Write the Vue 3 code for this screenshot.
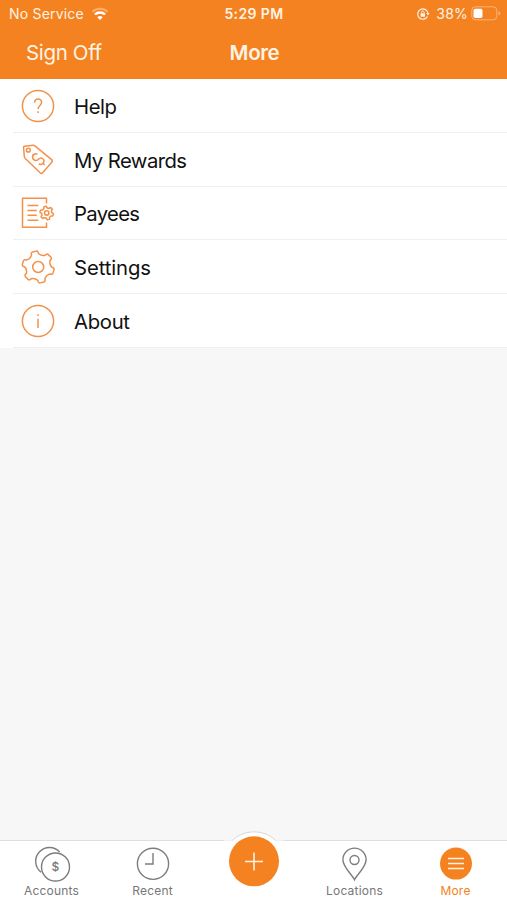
<script setup>
function gear(cx, cy, outer, inner, teeth, startDeg) {
  const pts = []
  const step = (Math.PI * 2) / teeth
  const start = (startDeg * Math.PI) / 180
  const at = (r, a) => `${(cx + r * Math.cos(a)).toFixed(2)} ${(cy + r * Math.sin(a)).toFixed(2)}`
  for (let i = 0; i < teeth; i++) {
    const a = start + i * step
    pts.push(`${i ? 'L' : 'M'}${at(inner, a - step * 0.27)}`)
    pts.push(`L${at(outer * 0.94, a - step * 0.22)}`)
    pts.push(`Q${at(outer * 1.01, a - step * 0.19)} ${at(outer, a - step * 0.11)}`)
    pts.push(`L${at(outer, a + step * 0.11)}`)
    pts.push(`Q${at(outer * 1.01, a + step * 0.19)} ${at(outer * 0.94, a + step * 0.22)}`)
    pts.push(`L${at(inner, a + step * 0.27)}`)
    pts.push(`Q${at(inner * 0.86, a + step * 0.5)} ${at(inner, a + step * 0.73)}`)
  }
  return pts.join('') + 'Z'
}
const settingsGear = gear(18.2, 18, 16, 13.3, 6, -104)
const payeesGear = gear(26.7, 18, 6.8, 5.4, 6, -104)
const rows = [
  { id: 'help', label: 'Help', width: 43 },
  { id: 'rewards', label: 'My Rewards', width: 113 },
  { id: 'payees', label: 'Payees', width: 66 },
  { id: 'settings', label: 'Settings', width: 77 },
  { id: 'about', label: 'About', width: 56 }
]
</script>

<template>
  <div class="screen">
    <header class="header">
      <div class="status">
        <div class="carrier">
          <span class="service">No Service</span>
          <svg width="18" height="14" viewBox="0 0 18 14" fill="none" stroke="#fff">
            <path d="M1.500 4.700C5.600.7 12.400.7 16.500 4.700" stroke-width="1.900" opacity=".35" />
            <path d="M4 7.500C6.700 4.800 11.300 4.800 14 7.500" stroke-width="2.400" />
            <path d="M9 13 6.300 10.200Q9 7.800 11.700 10.200Z" fill="#fff" stroke="none" />
          </svg>
        </div>
        <span class="time">5:29 PM</span>
        <div class="power">
          <svg width="14" height="14" viewBox="0 0 14 14" fill="none" stroke="#fff" opacity=".9">
            <path d="M11.500 9.500A5.200 5.200 0 1 1 12 6" stroke-width="1.200" />
            <path d="M10.200 6h3.400l-1.700 2.500Z" fill="#fff" stroke="none" />
            <rect x="4.600" y="6.300" width="4.400" height="3.400" rx=".5" fill="#fff" stroke="none" />
            <path d="M5.500 6.500V5.300a1.300 1.300 0 0 1 2.600 0V6.500" stroke-width=".9" />
          </svg>
          <span class="percent">38%</span>
          <svg class="battery" width="30" height="15" viewBox="0 0 30 15">
            <rect x=".8" y=".8" width="25" height="13" rx="3.500" fill="none" stroke="#fff" opacity=".4" />
            <path d="M27.500 5v4.600q1.700-.7 1.700-2.300T27.500 5" fill="#fff" opacity=".4" />
            <rect x="2.500" y="2.700" width="9" height="9.300" rx="1.700" fill="#fff" />
          </svg>
        </div>
      </div>
      <div class="nav">
        <span class="signoff">Sign Off</span>
        <h1>More</h1>
        <span></span>
      </div>
    </header>

    <main>
      <div v-for="row in rows" :key="row.id" class="row">
        <svg class="icon" width="36" height="36" viewBox="0 0 36 36">
          <template v-if="row.id === 'help'">
            <circle cx="18" cy="18" r="15.600" />
            <path d="M14.600 14.800c0-4.900 7-4.900 7-.5 0 3.200-3.500 3.100-3.500 6.800M18.100 23.300v1.700" />
          </template>
          <template v-else-if="row.id === 'rewards'">
            <path d="M4.500 4.300 13 3.300Q14.200 3.200 15.200 4.100L31.600 17.600Q33 18.800 31.800 20.200L22.600 30.800Q21.400 32 20.100 30.800L5.300 16.500Q4.500 15.700 4.300 14.500L3.600 5.300Q3.500 4.400 4.500 4.300Z" />
            <circle cx="8.300" cy="8.200" r="1.900" />
            <path d="M17.500 12.200C14.500 10.900 11.400 14 13 16.800C14.800 19.400 17.500 18.400 18.500 17.300C20 15.600 22.300 15.400 23.600 17.600C25 20.400 21.600 23.600 18.700 21.900M14 13.600l-1.500-1.400M22.900 21.300l1.800 1.700" />
          </template>
          <template v-else-if="row.id === 'payees'">
            <path d="M26.500 8.600V3.300H2.500V32.200H26.500V27.400M7.500 10.500H18.300M7.500 15.400H16.800M7.500 20.300H16.800M7.500 25.200H18.300" />
            <path :d="payeesGear" />
            <circle cx="26.700" cy="18" r="2.200" />
          </template>
          <template v-else-if="row.id === 'settings'">
            <path :d="settingsGear" />
            <circle cx="18.200" cy="18" r="5.500" />
          </template>
          <template v-else>
            <circle cx="18" cy="18" r="15.600" />
            <path d="M18 11.200v1.900M18 15.700v9.200" />
          </template>
        </svg>
        <svg class="label" width="200" height="36">
          <text x="0" y="26" :textLength="row.width">{{ row.label }}</text>
        </svg>
      </div>
    </main>

    <nav class="tabs">
      <div class="tab">
        <svg width="38" height="38" viewBox="0 0 38 38">
          <path d="M8.200 27.300A13.800 13.800 0 1 1 26.800 7.100" />
          <circle cx="22.500" cy="22" r="14" />
          <text x="22.500" y="26.300" text-anchor="middle">$</text>
        </svg>
        <span>Accounts</span>
      </div>
      <div class="tab">
        <svg width="38" height="38" viewBox="0 0 38 38">
          <circle cx="19" cy="18.800" r="15.600" />
          <path d="M19 8V19H11" />
        </svg>
        <span>Recent</span>
      </div>
      <div class="tab center">
        <svg class="add" width="60" height="60" viewBox="0 0 60 60">
          <path class="hump" d="M0 9.500H8.500C19-2 41-2 51.500 9.500H60V14H0Z" />
          <path class="edge" d="M8.500 9.500C19-2 41-2 51.500 9.500" />
          <circle class="disc" cx="30" cy="30.300" r="25" />
          <path class="plus" d="M21 30.500H39M30 21.500V39.500" />
        </svg>
      </div>
      <div class="tab">
        <svg width="38" height="38" viewBox="0 0 38 38">
          <path d="M18.500 34.800C16 29.500 6.900 22 6.900 14.700a11.600 11.600 0 0 1 23.200 0C30.100 22 21 29.500 18.500 34.800Z" />
          <circle cx="18.500" cy="15" r="4.500" />
        </svg>
        <span>Locations</span>
      </div>
      <div class="tab active">
        <svg width="38" height="38" viewBox="0 0 38 38">
          <circle class="disc" cx="19" cy="18.600" r="16" />
          <path class="plus" d="M11 13.500H27M11 18.500H27M11 23.500H27" />
        </svg>
        <span>More</span>
      </div>
    </nav>
  </div>
</template>

<style>
body { margin: 0; }
</style>

<style scoped>
.screen {
  width: 507px;
  height: 900px;
  display: flex;
  flex-direction: column;
  background: #f7f7f7;
  font-family: Inter, "Liberation Sans", sans-serif;
  overflow: hidden;
}
.header { height: 79px; background: #f58220; color: #fff3e4; flex: none; }
.status {
  height: 28px;
  display: grid;
  grid-template-columns: 1fr auto 1fr;
  align-items: center;
  font-size: 14px;
  padding: 0 6px 1px 9px;
  box-sizing: border-box;
}
.carrier, .power { display: flex; align-items: center; }
.carrier { gap: 7px; }
.service { letter-spacing: 0.2px; }
.time { font-weight: 600; letter-spacing: 0.4px; margin-right: 2px; }
.power { justify-content: flex-end; }
.percent { margin-left: 6px; letter-spacing: 0.2px; }
.battery { margin-left: 3px; }
.nav {
  display: grid;
  grid-template-columns: 1fr auto 1fr;
  align-items: center;
  height: 49px;
  padding: 0 25px 0 26px;
}
.signoff { font-size: 20.5px; letter-spacing: -0.35px; }
h1 { margin: 0; font-size: 20.5px; font-weight: 600; letter-spacing: -0.35px; padding-left: 1px; }
main { background: #fff; height: 269px; flex: none; }
.row {
  height: 53.8px;
  box-sizing: border-box;
  display: flex;
  align-items: center;
  padding-left: 19.6px;
  background: linear-gradient(#efefef, #efefef) 13px 100% / 100% 1px no-repeat;
}
.icon { fill: none; stroke: #f39149; stroke-width: 1.5; stroke-linejoin: round; flex: none; }
.label { margin-left: 18.9px; font-size: 20.3px; fill: #111; overflow: visible; }
.tabs {
  margin-top: auto;
  height: 60px;
  flex: none;
  box-sizing: border-box;
  border-top: 1px solid #dedede;
  background: #fff;
  display: grid;
  grid-template-columns: repeat(5, 101px);
  padding-left: 1px;
}
.tab {
  display: flex;
  flex-direction: column;
  align-items: center;
  padding-top: 4px;
  font-size: 12px;
  line-height: 16px;
  letter-spacing: 0.2px;
  color: #777;
}
.tab svg { fill: none; stroke: #7d7d7d; stroke-width: 1.4; flex: none; }
.tab text { fill: #777; stroke: none; font-size: 12px; font-weight: 500; letter-spacing: 0; }
.tab .add { margin-top: -14px; }
.tab .hump { fill: #fff; stroke: none; }
.tab .edge { stroke: #d8d8d8; stroke-width: 1; }
.tab .disc { fill: #f58220; stroke: none; }
.tab .plus { stroke: #fff1df; stroke-width: 1.6; }
.tab.active { color: #f58220; }
</style>
